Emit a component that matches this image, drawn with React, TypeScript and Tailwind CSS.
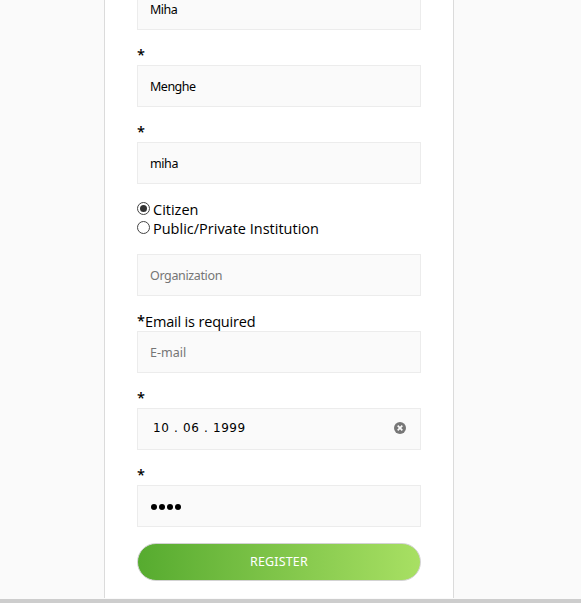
import type { ReactNode } from "react";

const inputClass =
  "block h-[42px] w-full rounded-none border border-[#ececec] bg-[#fafafa] px-3 pt-px font-['Noto_Sans',sans-serif] text-[12.5px] text-black outline-none placeholder:text-[#757575]";

function Field({ message, children }: { message?: string; children: ReactNode }) {
  return (
    <div className="mb-4">
      <div className="flex h-[19px] whitespace-nowrap pt-px text-[14.5px] leading-[18px]">
        <span className="-mt-px w-2 font-semibold">*</span>
        {message && <span className="tracking-[-0.17px]">{message}</span>}
      </div>
      {children}
    </div>
  );
}

function Choice({ label, checked }: { label: string; checked?: boolean }) {
  return (
    <label className="flex h-[19px] gap-[3px] whitespace-nowrap text-[14.5px] leading-[19px]">
      <span className="mt-0.5 flex size-[13px] shrink-0 items-center justify-center rounded-full border border-[#444] bg-white">
        {checked && <span className="size-[7px] rounded-full bg-[#333]" />}
      </span>
      <span>{label}</span>
    </label>
  );
}

export default function App() {
  return (
    <div className="h-[603px] overflow-hidden border-b-4 border-[#cdcdcd] bg-[#fafafa] font-['Open_Sans',sans-serif] text-black">
      <main className="ml-[104px] h-[598px] w-[350px] border-x border-[#dbdbdb] bg-white px-8">
        <div className="-mt-3 mb-4 inline-block w-full align-top">
          <input className={`${inputClass} tracking-[-0.5px]`} defaultValue="Miha" />
        </div>
        <Field>
          <input className={`${inputClass} tracking-[-0.5px]`} defaultValue="Menghe" />
        </Field>
        <Field>
          <input className={`${inputClass} tracking-[-0.4px]`} defaultValue="miha" />
        </Field>
        <div className="mb-4 h-[38px]">
          <Choice label="Citizen" checked />
          <Choice label="Public/Private Institution" />
        </div>
        <input className={`${inputClass} tracking-[-0.36px]`} placeholder="Organization" />
        <div className="h-4" />
        <Field message="Email is required">
          <input className={`${inputClass} tracking-[0px]`} placeholder="E-mail" />
        </Field>
        <Field>
          <div className="flex h-[42px] items-center justify-between border border-[#ececec] bg-[#fafafa] pr-3.5 pb-0.5 pl-[15px] font-['DejaVu_Sans',sans-serif] text-[12px] tracking-[0.5px]">
            <div className="flex">
              <span className="w-[21px]">10</span>
              <span className="w-[9px]">.</span>
              <span className="w-[21px]">06</span>
              <span className="w-[9px]">.</span>
              <span>1999</span>
            </div>
            <svg className="size-3" viewBox="0 0 12 12">
              <circle cx="6" cy="6" r="6" fill="#777" />
              <path d="M3.7 3.7l4.6 4.6M8.3 3.7L3.7 8.3" stroke="#fafafa" strokeWidth="1.7" />
            </svg>
          </div>
        </Field>
        <Field>
          <div className="flex h-[42px] items-center gap-0.5 border border-[#ececec] bg-[#fafafa] px-[13px] pt-0.5">
            {[0, 1, 2, 3].map((i) => (
              <span key={i} className="size-1.5 rounded-full bg-black" />
            ))}
          </div>
        </Field>
        <button className="block h-[38px] w-full rounded-full border border-[#d3d3d3] bg-linear-to-r from-[#56ab2f] to-[#a8e063] pt-px font-['Noto_Sans',sans-serif] text-[12.5px] tracking-[0.15px] text-white">
          REGISTER
        </button>
      </main>
    </div>
  );
}
